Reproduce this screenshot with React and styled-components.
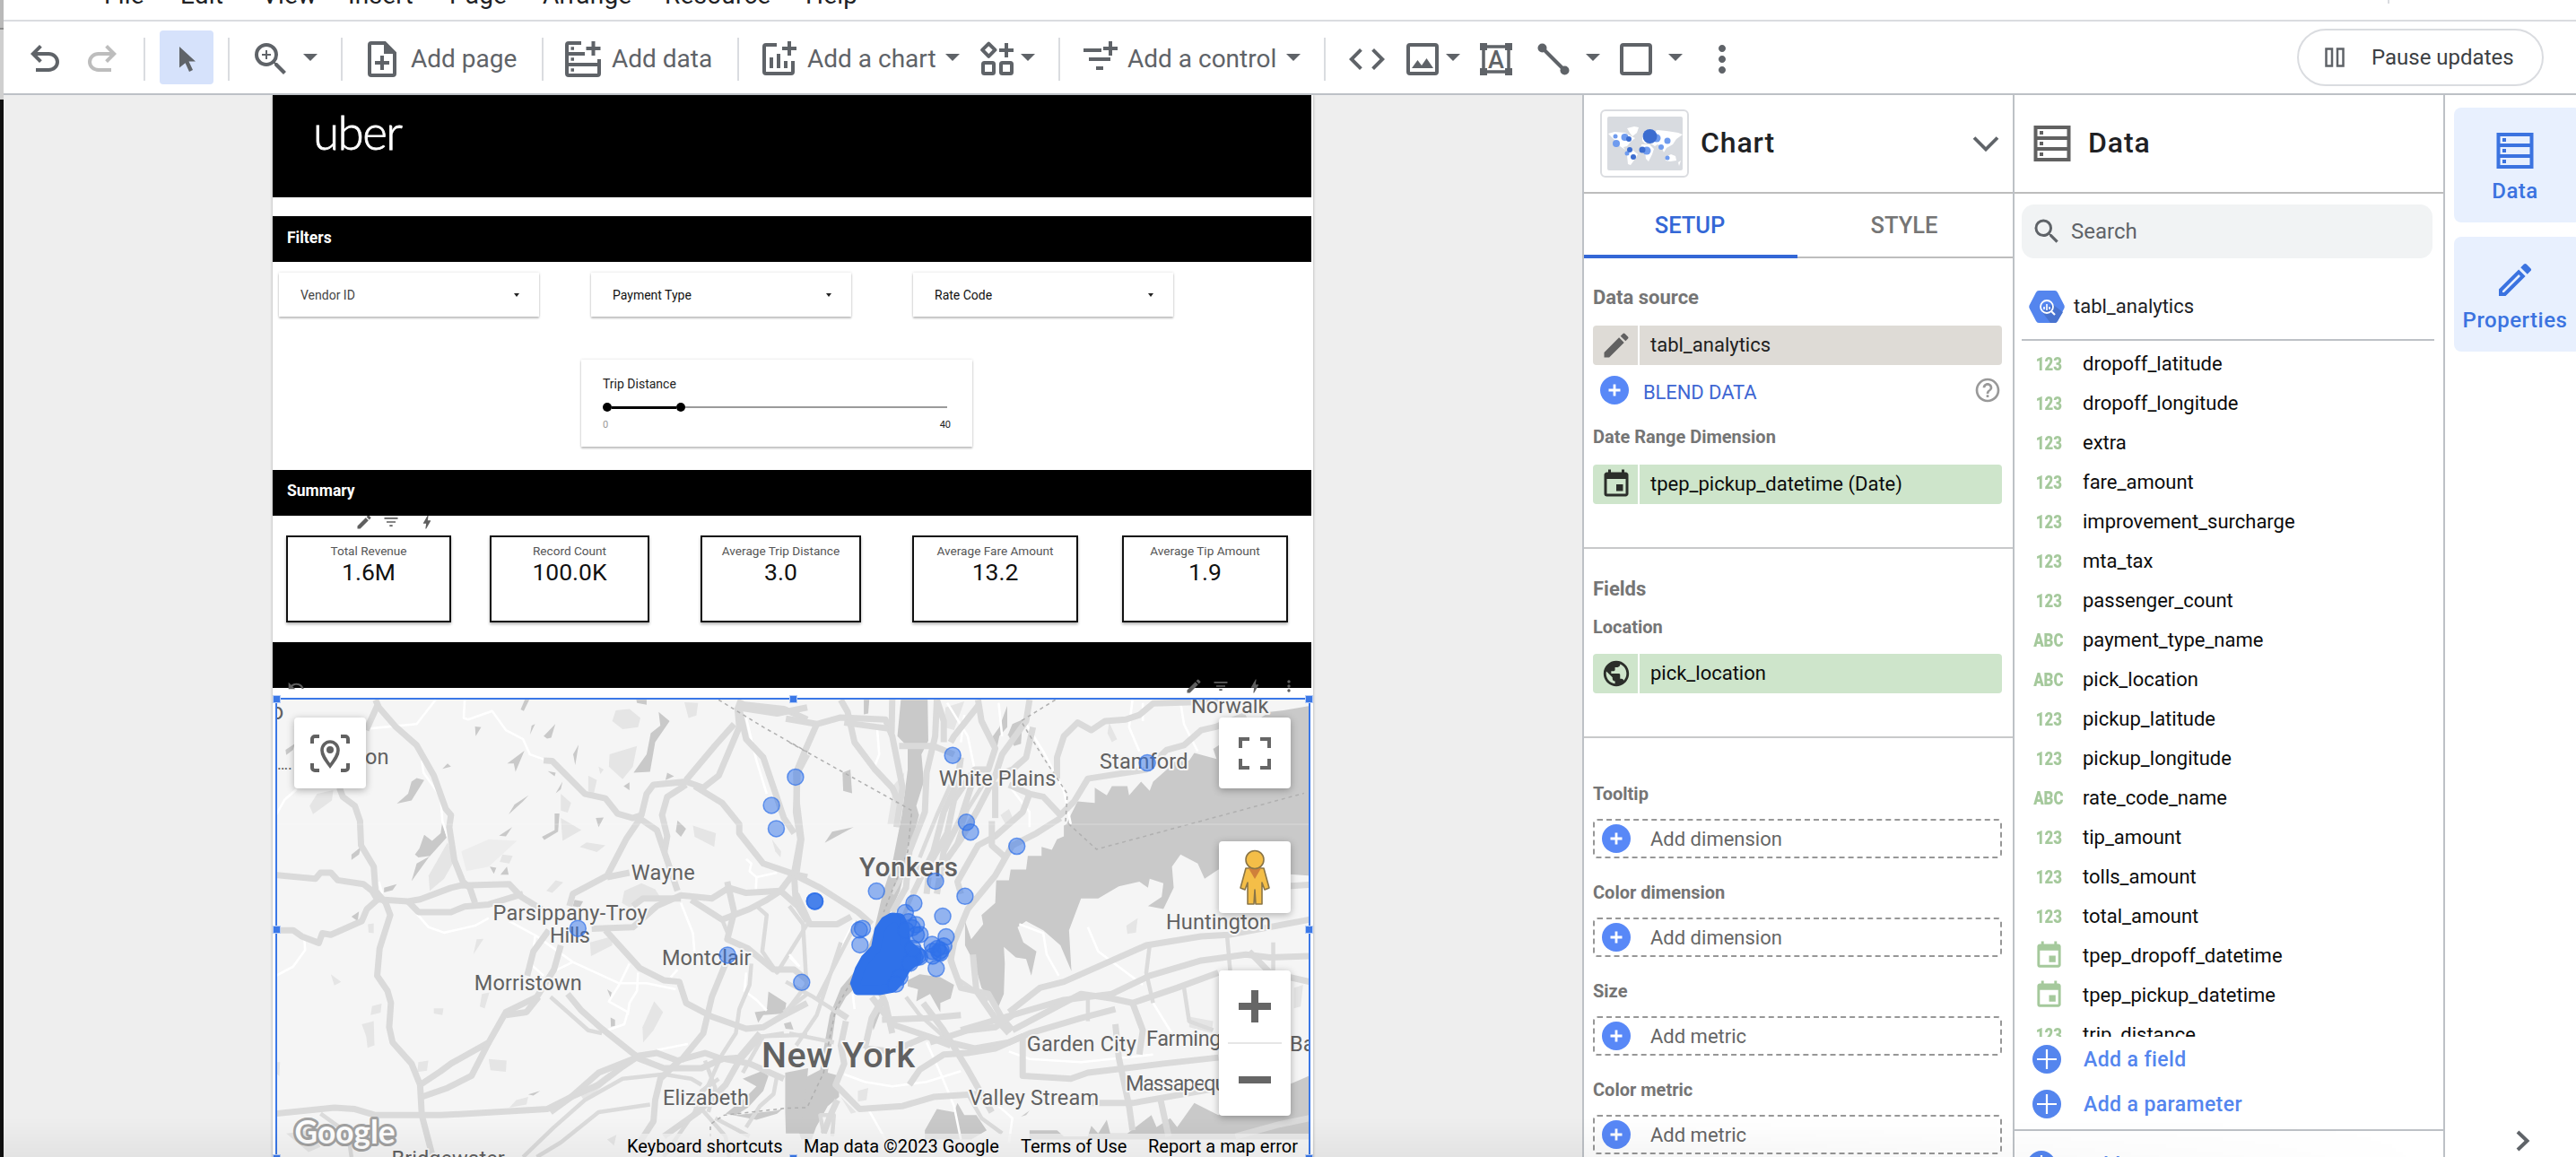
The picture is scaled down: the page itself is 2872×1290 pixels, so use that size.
import React from "react";
import styled, { createGlobalStyle, css } from "styled-components";
import {
  MdBolt,
  MdCode,
  MdEdit,
  MdEvent,
  MdFilterList,
  MdHelpOutline,
  MdMoreVert,
  MdOutlineEdit,
  MdPublic,
  MdSearch,
  MdUndo,
  MdZoomIn,
} from "react-icons/md";

const Global = createGlobalStyle`
  * { box-sizing: border-box; }
  html, body { margin: 0; padding: 0; background: #fff; }
  body { font-family: Roboto, "Liberation Sans", sans-serif; overflow: hidden; }
  svg { display: block; flex: none; }
`;

/* ---------- shell ---------- */

const Screen = styled.div`
  position: relative;
  display: flex;
  width: 2872px;
  height: 1290px;
  overflow: hidden;
  background: #fff;
`;

const DesktopEdge = styled.div`
  flex: none;
  width: 4px;
  background: linear-gradient(
    #b9b9b9 0 31px,
    #8c8c8c 31px 33px,
    #cfcfcf 33px 111px,
    #101010 111px
  );
`;

const AppWindow = styled.div`
  flex: 1;
  display: flex;
  flex-direction: column;
  min-width: 0;
`;

const BottomShade = styled.div`
  position: absolute;
  left: 0;
  right: 0;
  bottom: 0;
  height: 44px;
  background: linear-gradient(rgba(0, 0, 0, 0), rgba(0, 0, 0, 0.045));
  mask-image: linear-gradient(to right, #000 60%, transparent 95%);
  pointer-events: none;
`;

/* ---------- menu ---------- */

const MenuBar = styled.nav`
  flex: none;
  display: flex;
  height: 24px;
  border-bottom: 2px solid #dadce0;
  overflow: hidden;
`;

const MenuItem = styled.span`
  flex: none;
  width: ${(p) => p.$w}px;
  margin-top: -21px;
  font-size: 28px;
  line-height: 32px;
  letter-spacing: 0.2px;
  color: #202124;
  white-space: nowrap;
`;

const MenuLead = styled.div`
  flex: none;
  width: 112px;
`;

const AvatarRule = styled.div`
  width: 2px;
  height: 4px;
  margin-left: auto;
  margin-right: 208px;
  background: #dadce0;
`;

/* ---------- toolbar ---------- */

const ToolBar = styled.div`
  flex: none;
  display: flex;
  align-items: center;
  height: 82px;
  border-bottom: 2px solid #bdc1c6;
  color: #5f6368;
`;

const Rule = styled.div`
  flex: none;
  width: 2px;
  height: 48px;
  margin: 4px ${(p) => p.$r}px 0 ${(p) => p.$l}px;
  background: #dadce0;
`;

const Tool = styled.div`
  flex: none;
  display: flex;
  align-items: center;
  justify-content: center;
  width: ${(p) => p.$w}px;
  margin-left: ${(p) => p.$l || 0}px;
  margin-top: 4px;
  color: ${(p) => (p.$muted ? "#bdbdbd" : "#5f6368")};
`;

const SelectTool = styled.div`
  flex: none;
  display: flex;
  align-items: center;
  justify-content: center;
  width: 60px;
  height: 60px;
  padding: 3px 0 0 1px;
  border-radius: 4px;
  background: #d6e2fb;
`;

const ToolText = styled.span`
  flex: none;
  width: ${(p) => p.$w}px;
  margin-left: ${(p) => p.$l}px;
  margin-top: 3px;
  font-size: 28px;
  line-height: 32px;
  white-space: nowrap;
`;

const Caret = styled.i`
  flex: none;
  width: 0;
  height: 0;
  margin-left: ${(p) => p.$l}px;
  border: 8px solid transparent;
  border-top-color: #5f6368;
  border-bottom-width: 0;
`;

const PauseButton = styled.button`
  flex: none;
  display: flex;
  align-items: center;
  width: 275px;
  height: 64px;
  margin: 0 36px 0 auto;
  padding: 0 0 0 29px;
  gap: 30px;
  border: 2px solid #dadce0;
  border-radius: 32px;
  background: #fff;
  font: 400 24px Roboto, sans-serif;
  color: #3c4043;
  white-space: nowrap;
`;

/* ---------- workspace ---------- */

const Workspace = styled.div`
  flex: 1;
  display: flex;
  min-height: 0;
`;

const Canvas = styled.main`
  flex: none;
  width: 1760px;
  padding-left: 300px;
  background: #eee;
  overflow: hidden;
`;

const Page = styled.div`
  display: flex;
  flex-direction: column;
  width: 1160px;
  height: 1200px;
  background: #fff;
  box-shadow: 0 0 3px rgba(0, 0, 0, 0.3);
`;

const Hero = styled.header`
  flex: none;
  width: 1158px;
  height: 114px;
  margin-bottom: 21px;
  padding: 11px 0 0 45px;
  background: #000;
`;

const Brand = styled.div`
  font-family: Lato, sans-serif;
  font-weight: 300;
  font-size: 53px;
  line-height: 60px;
  letter-spacing: -1.6px;
  -webkit-text-stroke: 0.8px #fff;
  color: #fff;
`;

const Band = styled.div`
  flex: none;
  width: 1158px;
  height: 51px;
  padding-left: 16px;
  background: #000;
  color: #fff;
  font-size: 17.5px;
  font-weight: 700;
  line-height: ${(p) => p.$lh || 48}px;
`;

const cardShadow = css`
  background: #fff;
  box-shadow: 0 2px 2px rgba(0, 0, 0, 0.22), 0 0 3px rgba(0, 0, 0, 0.14);
`;

const FilterRow = styled.div`
  flex: none;
  display: flex;
  padding: 12px 0 0 7px;
`;

const FilterCard = styled.div`
  flex: none;
  display: flex;
  align-items: center;
  justify-content: space-between;
  width: 290px;
  height: 49px;
  margin-right: ${(p) => p.$gap}px;
  padding: 0 22px 0 24px;
  font-size: 14px;
  color: ${(p) => p.$color || "#111"};
  ${cardShadow}
`;

const SmallCaret = styled.i`
  border: 3.5px solid transparent;
  border-top: 4.5px solid #222;
  border-bottom-width: 0;
`;

const SliderCard = styled.div`
  flex: none;
  display: flex;
  flex-direction: column;
  width: 436px;
  height: 97px;
  margin: 48px 0 26px 344px;
  padding: 19px 24px 0;
  font-size: 14px;
  line-height: 16px;
  color: #222;
  ${cardShadow}
`;

const SliderTrack = styled.div`
  display: flex;
  align-items: center;
  height: 12px;
  width: 384px;
  margin-top: 12px;
`;

const Thumb = styled.div`
  width: 10px;
  height: 10px;
  border-radius: 50%;
  background: #000;
`;

const TrackPart = styled.div`
  width: ${(p) => p.$w}px;
  height: ${(p) => (p.$on ? 3 : 2)}px;
  background: ${(p) => (p.$on ? "#000" : "#9a9a9a")};
`;

const SliderEnds = styled.div`
  display: flex;
  justify-content: space-between;
  width: 388px;
  margin-top: 6px;
  font-size: 11px;
`;

const EndValue = styled.span`
  color: ${(p) => (p.$dim ? "#999" : "#222")};
`;

const MiniTools = styled.div`
  flex: none;
  display: flex;
  align-items: flex-start;
  height: 22px;
  padding-left: 92px;
  overflow: hidden;
  color: #5f5f5f;
`;

const MiniIcon = styled.span`
  display: flex;
  margin: ${(p) => p.$t || 0}px ${(p) => p.$r || 0}px 0 0;
`;

const ScoreRow = styled.div`
  flex: none;
  display: flex;
  height: 119px;
  padding-left: 15px;
`;

const ScoreCard = styled.div`
  flex: none;
  width: ${(p) => p.$w}px;
  height: 97px;
  margin-right: ${(p) => p.$gap}px;
  padding-top: 5px;
  border: 2px solid #111;
  text-align: center;
  box-shadow: 0 2px 3px rgba(0, 0, 0, 0.3);
`;

const ScoreLabel = styled.div`
  font-size: 13.6px;
  line-height: 20px;
  color: #555;
  white-space: nowrap;
`;

const ScoreValue = styled.div`
  font-size: 26.5px;
  line-height: 28px;
  color: #111;
`;

/* ---------- map ---------- */

const MapFrame = styled.div`
  position: relative;
  flex: none;
  width: 1154px;
  height: 540px;
  margin: 11px 0 0 3px;
  border: 2px solid #3b78e7;
`;

const Handle = styled.i`
  position: absolute;
  left: ${(p) => p.$x}px;
  top: ${(p) => p.$y}px;
  width: 9px;
  height: 9px;
  border: 1px solid #b6cdf7;
  background: #3b78e7;
`;

const MapTools = styled.div`
  position: absolute;
  right: ${(p) => (p.$left === undefined ? "12px" : "auto")};
  left: ${(p) => (p.$left === undefined ? "auto" : p.$left + "px")};
  top: ${(p) => p.$top}px;
  display: flex;
  align-items: flex-start;
  color: #5f5f5f;
`;

const MapButton = styled.div`
  position: absolute;
  left: ${(p) => p.$x}px;
  top: ${(p) => p.$y}px;
  display: flex;
  flex-direction: column;
  align-items: center;
  justify-content: center;
  width: 80px;
  height: ${(p) => p.$h || 79}px;
  border-radius: 4px;
  background: #fff;
  box-shadow: 0 2px 8px rgba(0, 0, 0, 0.3);
`;

const ZoomHalf = styled.div`
  flex: 1;
  display: flex;
  align-items: center;
  justify-content: center;
`;

const ZoomRule = styled.div`
  width: 60px;
  height: 2px;
  background: #e6e6e6;
`;

const MapFooter = styled.div`
  position: absolute;
  left: 382px;
  right: 0;
  top: 484px;
  height: 56px;
  display: flex;
  padding-left: 8px;
  background: rgba(245, 245, 245, 0.7);
  font-size: 20px;
  line-height: 28px;
  color: #000;
  white-space: nowrap;
`;

const FooterLink = styled.span`
  flex: none;
  width: ${(p) => p.$w}px;
`;

/* ---------- panels ---------- */

const Panel = styled.aside`
  flex: none;
  display: flex;
  flex-direction: column;
  width: ${(p) => p.$w}px;
  border-left: 2px solid #bdc1c6;
  overflow: hidden;
`;

const PanelHead = styled.div`
  flex: none;
  display: flex;
  align-items: center;
  height: 110px;
  padding: 0 15px 0 ${(p) => p.$l}px;
  border-bottom: 2px solid #bdbdbd;
`;

const PanelTitle = styled.h2`
  flex: 1;
  margin: -2px 0 0 ${(p) => p.$l}px;
  font-size: 32px;
  font-weight: 500;
  letter-spacing: 0.9px;
  color: #202124;
`;

const ThumbFrame = styled.div`
  flex: none;
  display: flex;
  align-items: center;
  justify-content: center;
  width: 99px;
  height: 76px;
  border: 2px solid #dadce0;
  border-radius: 6px;
`;

const Tabs = styled.div`
  flex: none;
  display: flex;
  height: 72px;
`;

const Tab = styled.div`
  flex: ${(p) => (p.$on ? "0 0 238px" : 1)};
  display: flex;
  align-items: center;
  justify-content: center;
  padding-top: ${(p) => (p.$on ? 1 : 0)}px;
  padding-right: 2px;
  border-bottom: ${(p) => (p.$on ? "4px solid #3367d6" : "2px solid #bdbdbd")};
  font-size: 25.5px;
  font-weight: 500;
  color: ${(p) => (p.$on ? "#3367d6" : "#757575")};
`;

const Section = styled.section`
  flex: none;
  display: flex;
  flex-direction: column;
  height: ${(p) => p.$h}px;
  padding: ${(p) => p.$t}px 12px 0 10px;
  border-bottom: 2px solid #c8c9ca;
`;

const Heading = styled.div`
  height: ${(p) => p.$h}px;
  font-size: ${(p) => (p.$big ? 22 : 20)}px;
  font-weight: 700;
  line-height: 26px;
  color: #757575;
  white-space: nowrap;
`;

const Chip = styled.div`
  flex: none;
  display: flex;
  gap: 2px;
  height: 44px;
  border-radius: 4px;
  overflow: hidden;
`;

const ChipIcon = styled.div`
  display: flex;
  align-items: center;
  justify-content: center;
  width: 50px;
  padding-left: 2px;
  background: ${(p) => p.$bg};
  color: ${(p) => p.$fg};
`;

const ChipText = styled.div`
  flex: 1;
  padding-left: 12px;
  background: ${(p) => p.$bg};
  font-size: 22px;
  line-height: 43px;
  color: ${(p) => p.$fg};
`;

const BlendRow = styled.div`
  flex: none;
  display: flex;
  align-items: center;
  height: 56px;
  margin-bottom: 11px;
  padding-left: 8px;
  color: #999;
`;

const BlendText = styled.span`
  flex: 1;
  margin: 4px 0 0 16px;
  font-size: 22px;
  letter-spacing: -0.1px;
  color: #3f67d3;
`;

const Slot = styled.div`
  flex: none;
  display: flex;
  align-items: center;
  gap: 22px;
  height: 44px;
  margin-bottom: 25px;
  padding-left: 8px;
  border: 2px dashed #979797;
  border-radius: 5px;
  font-size: 22px;
  color: #666;
`;

const SearchBox = styled.div`
  flex: none;
  display: flex;
  align-items: center;
  gap: 9px;
  height: 60px;
  margin: 12px 12px 0 8px;
  padding-left: 10px;
  border-radius: 14px;
  background: #f1f3f4;
  font-size: 24px;
  color: #5f6368;
`;

const SourceRow = styled.div`
  flex: none;
  display: flex;
  align-items: center;
  gap: 10px;
  height: 92px;
  margin: 0 10px 0 8px;
  padding: 17px 0 0 8px;
  border-bottom: 2px solid #bdc1c6;
  font-size: 22px;
  color: #202124;
`;

const FieldList = styled.div`
  flex: none;
  height: 776px;
  padding-top: 3px;
  overflow: hidden;
`;

const FieldRow = styled.div`
  display: flex;
  align-items: center;
  height: 44px;
  padding-left: 20px;
  font-size: 22px;
  color: #0c0c0c;
`;

const FieldKind = styled.div`
  display: flex;
  align-items: center;
  justify-content: center;
  width: 36px;
  height: 44px;
  margin-right: 20px;
  color: #a5c99c;
  font-size: 20px;
  font-weight: 900;
`;

const Squeeze = styled.span`
  display: block;
  transform: scaleX(0.84);
  padding-top: 1px;
`;

const AddRow = styled.div`
  flex: none;
  display: flex;
  align-items: center;
  gap: 25px;
  height: 50px;
  padding-left: 20px;
  font-size: 23px;
  font-weight: 500;
  letter-spacing: 0.4px;
  color: #5485ee;
`;

const AddDataRow = styled(AddRow)`
  height: 70px;
  margin-top: 3px;
  padding: 8px 0 0 14px;
  gap: 30px;
  border-top: 2px solid #bdc1c6;
`;

const Rail = styled.aside`
  flex: 1;
  display: flex;
  flex-direction: column;
  align-items: flex-start;
  gap: 16px;
  padding: 14px 0 0 10px;
  border-left: 2px solid #bdc1c6;
`;

const RailButton = styled.div`
  flex: none;
  display: flex;
  flex-direction: column;
  align-items: center;
  justify-content: center;
  gap: 9px;
  width: 142px;
  height: 128px;
  padding: 7px 6px 0 0;
  border-radius: 8px;
  background: #e8f0fe;
  font-size: 24px;
  font-weight: 500;
  line-height: 30px;
  letter-spacing: 0.5px;
  color: #3b73e0;
`;

const RailIcon = styled.div`
  display: flex;
  align-items: center;
  justify-content: center;
  height: 42px;
`;

const RailExpand = styled.div`
  margin: auto 0 0 69px;
  padding-bottom: 6px;
`;

/* ---------- icons ---------- */

const UndoIcon = ({ flip }) => (
  <svg width="48" height="48" viewBox="0 0 24 24" fill="currentColor">
    <path
      transform={flip ? "translate(24 0) scale(-1 1)" : undefined}
      d="M7 19v-2h7.1q1.575 0 2.738-1T18 13.5T16.838 11T14.1 10H7.8l2.6 2.6L9 14L4 9l5-5l1.4 1.4L7.8 8h6.3q2.425 0 4.163 1.575T20 13.5t-1.737 3.925T14.1 19z"
    />
  </svg>
);

const Glyph = ({ w, children }) => (
  <svg width={w} height="40" viewBox={`0 0 ${w} 40`} fill="none" stroke="currentColor" strokeWidth="4">
    {children}
  </svg>
);

const AddPageIcon = () => (
  <Glyph w={32}>
    <path d="M4 2H19L30 13V36a2 2 0 0 1-2 2H4a2 2 0 0 1-2-2V4a2 2 0 0 1 2-2Z" />
    <path d="M18 2V14H30L19 2Z" fill="currentColor" stroke="none" />
    <path d="M16 16V32M8 24H24" />
  </Glyph>
);

const AddDataIcon = () => (
  <Glyph w={40}>
    <path d="M18 2H4a2 2 0 0 0-2 2V36a2 2 0 0 0 2 2H36a2 2 0 0 0 2-2V20M2 14H22M2 26H38M31.500 0V16M23.500 8H39.500" />
    <path d="M6.500 8H10M6.500 20H10M6.500 32H10" strokeWidth="3.500" />
  </Glyph>
);

const AddChartIcon = () => (
  <Glyph w={38}>
    <path d="M16 4H4a2 2 0 0 0-2 2V34a2 2 0 0 0 2 2H32a2 2 0 0 0 2-2V22M10 18V30M18 14V30M26 22V30M30 0V16M22 8H38" />
  </Glyph>
);

const CommunityIcon = () => (
  <Glyph w={38}>
    <path d="M10.300 2.600L17.400 9.700L10.300 16.800L3.200 9.700Z" strokeLinejoin="round" />
    <path d="M30 2V18M22 10H38" />
    <rect x="4" y="24" width="12" height="12" rx="1.500" />
    <rect x="24" y="24" width="12" height="12" rx="1.500" />
  </Glyph>
);

const AddControlIcon = () => (
  <Glyph w={38}>
    <path d="M0 10H20M6 20H30M14 30H22M30 0V16M22 8H38" />
  </Glyph>
);

const ImageIcon = () => (
  <Glyph w={36}>
    <rect x="2" y="4" width="32" height="32" rx="2" />
    <path d="M6 30L12.500 21L17 27L22.500 19L30 30Z" fill="currentColor" stroke="none" />
  </Glyph>
);

const TextIcon = () => (
  <Glyph w={36}>
    <path d="M4 6H32V34H4Z" strokeWidth="3.500" />
    <path d="M0 2H8V10H0ZM28 2H36V10H28ZM0 30H8V38H0ZM28 30H36V38H28Z" fill="currentColor" stroke="none" />
    <text x="18" y="30" textAnchor="middle" fontSize="27" fontWeight="500" fontFamily="Roboto, sans-serif" fill="currentColor" stroke="none">A</text>
  </Glyph>
);

const LineIcon = () => (
  <Glyph w={36}>
    <path d="M5 7L31 33" />
    <circle cx="5.500" cy="7.500" r="5" fill="currentColor" stroke="none" />
    <circle cx="30.500" cy="32.500" r="5" fill="currentColor" stroke="none" />
  </Glyph>
);

const ShapeIcon = () => (
  <Glyph w={36}>
    <rect x="2" y="4" width="32" height="32" rx="2" />
  </Glyph>
);

const PointerIcon = () => (
  <svg width="20" height="28" viewBox="0 0 20 28" fill="#5f6368">
    <path d="M1 0L19 16.500H11.500L16 26L12 28L7.600 18.300L1 23.500Z" />
  </svg>
);

const PauseIcon = () => (
  <svg width="22" height="22" viewBox="0 0 22 22" fill="none" stroke="#5f6368" strokeWidth="2.500">
    <path d="M1.500 1.500H8V20.500H1.500ZM14 1.500H20.500V20.500H14Z" />
  </svg>
);

const RackIcon = ({ color }) => (
  <svg width="42" height="40" viewBox="0 0 42 40" fill="none" stroke={color} strokeWidth="4">
    <path d="M2.500 2H39.500V38H2.500ZM2.500 14H39.500M2.500 26H39.500" />
    <path d="M7 8H11M7 20H11M7 32H11" />
  </svg>
);

const PlusDisc = ({ thin }) => (
  <svg width="32" height="32" viewBox="0 0 32 32">
    <circle cx="16" cy="16" r="16" fill={thin ? "#5485ee" : "#5888f7"} />
    {thin ? (
      <path d="M16 5V27M5 16H27" stroke="#fff" strokeWidth="2.200" />
    ) : (
      <path d="M16 9.500V22.500M9.500 16H22.500" stroke="#fff" strokeWidth="2.800" />
    )}
  </svg>
);

const Chevron = ({ right }) =>
  right ? (
    <svg width="16" height="24" viewBox="0 0 16 24" fill="none" stroke="#5f6368" strokeWidth="4">
      <path d="M2 2L12.500 12L2 22" />
    </svg>
  ) : (
    <svg width="30" height="18" viewBox="0 0 30 18" fill="none" stroke="#5f6368" strokeWidth="3.800">
      <path d="M2 2.500L15 15.500L28 2.500" />
    </svg>
  );

const QueryIcon = () => (
  <svg width="40" height="36" viewBox="0 0 40 36">
    <path d="M11 0H29Q31 0 32 2L39.500 16.500Q40 18 39.500 19.500L32 34Q31 36 29 36H11Q9 36 8 34L.5 19.500Q0 18 .5 16.500L8 2Q9 0 11 0Z" fill="#5485ee" />
    <path d="M26 15L38 24L32 34Q31 36 29 36H24L15 24Z" fill="#4873cf" />
    <circle cx="20" cy="18" r="7" fill="none" stroke="#fff" strokeWidth="1.800" />
    <path d="M25 23L29 27" stroke="#fff" strokeWidth="2.200" />
    <path d="M17 18V21M20 15V22M23 18V21" stroke="#fff" strokeWidth="1.600" />
  </svg>
);

const MapThumb = () => (
  <svg width="84" height="60" viewBox="0 0 84 60">
    <rect width="84" height="60" rx="2" fill="#d8dbe0" />
    <g fill="#fff">
      <path d="M1 19L8 17L20 18L27 22L31 24L26 28L22 33L18 34L20 37L14 33L9 27L5 23Z" />
      <path d="M22 13L30 11L35 12L33 18L28 22L25 18Z" />
      <path d="M23 37L29 38L34 42L31 47L26 54L23 53L22 43Z" />
      <path d="M39 21L43 17L49 18L56 15L66 16L79 18L84 20L77 25L73 31L66 35L63 40L60 33L56 31L53 33L47 29L42 30L39 27Z" />
      <path d="M38 31L47 31L52 36L50 42L46 50L43 47L42 39L37 37Z" />
      <path d="M65 45L71 42L76 44L77 49L70 50L65 49Z" />
      <path d="M79 51L82 49L80 55Z" />
    </g>
    <g fill="#6f9bee">
      <circle cx="10" cy="30" r="4" />
      <circle cx="19.500" cy="23" r="4" />
      <circle cx="9" cy="22" r="2.500" />
      <circle cx="44" cy="38" r="4.500" />
      <circle cx="55" cy="24" r="4.500" />
      <circle cx="67" cy="27" r="3.500" />
      <circle cx="60" cy="34" r="3" />
      <circle cx="67" cy="46" r="2.500" />
      <circle cx="22" cy="41" r="2.500" />
    </g>
    <g fill="#3c6dd0">
      <circle cx="47.500" cy="22" r="8" />
      <circle cx="24" cy="25" r="3" />
      <circle cx="25" cy="37" r="3" />
      <circle cx="29" cy="45" r="3" />
      <circle cx="39" cy="37" r="3.500" />
    </g>
  </svg>
);

const LocateIcon = () => (
  <svg width="46" height="44" viewBox="0 0 46 44" fill="none" stroke="#616161" strokeWidth="4">
    <path d="M3 11V6a3 3 0 0 1 3-3H11M35 3H40a3 3 0 0 1 3 3V11M43 33V38a3 3 0 0 1-3 3H35M11 41H6a3 3 0 0 1-3-3V33" />
    <path d="M23 36C17 28 14 23.500 14 18.500a9 9.500 0 0 1 18 0C32 23.500 29 28 23 36Z" strokeWidth="3.600" />
    <circle cx="23" cy="18" r="4" fill="#616161" stroke="none" />
  </svg>
);

const FullscreenGlyph = () => (
  <svg width="36" height="36" viewBox="0 0 36 36" fill="none" stroke="#666" strokeWidth="4">
    <path d="M2 12V2H12M24 2H34V12M34 24V34H24M12 34H2V24" />
  </svg>
);

const Pegman = () => (
  <svg width="36" height="62" viewBox="0 0 36 62" stroke="#8a7547" strokeWidth="1.600">
    <path d="M8 21H28L34 43L29 45L26 37L26 61H19L18 45L17 61H10L10 37L7 45L2 43Z" fill="#f4be48" strokeLinejoin="round" />
    <path d="M11 21H25L18 33Z" fill="#d0803a" stroke="none" />
    <circle cx="18" cy="11.500" r="10" fill="#f4be48" />
  </svg>
);

const PlusGlyph = () => (
  <svg width="36" height="36" viewBox="0 0 36 36" stroke="#666" strokeWidth="8">
    <path d="M18 0V36M0 18H36" />
  </svg>
);

const MinusGlyph = () => (
  <svg width="36" height="36" viewBox="0 0 36 36" stroke="#666" strokeWidth="8">
    <path d="M0 18H36" />
  </svg>
);

/* ---------- map drawing ---------- */

const west = {
  parks: [
    "1010,95 1050,90 1082,120 1075,150 1030,157 1000,130",
    "992,240 1072,212 1060,280 1030,322 990,280",
    "1210,68 1250,70 1245,112 1222,120",
    "850,450 910,490 855,525",
    "905,545 925,530 980,540 955,562",
    "680,570 710,575 700,600 672,595",
    "835,655 857,662 825,697 808,690",
    "1028,730 1035,690 1085,665 1125,685 1142,715 1080,728 1050,745",
    "1122,1055 1148,1090 1120,1150 1090,1190 1088,1140",
    "1235,475 1302,500 1297,545 1240,512",
    "118,410 140,370 187,358 183,392 128,437",
    "465,640 520,530 540,590 510,650 468,690",
    "270,1130 305,1120 307,1200 287,1208 283,1170",
    "300,1070 328,1062 325,1092 296,1100",
    "640,1245 692,1250 690,1287 645,1282",
    "435,1255 464,1250 460,1283 432,1288",
    "480,1078 508,1078 505,1100 480,1095",
    "180,965 210,990 190,1002",
    "620,1030 642,1025 628,1078 614,1072",
    "605,850 625,848 595,900",
    "935,860 1000,840 1000,870 938,905",
    "985,1510 1012,1495 1005,1530",
    "50,1490 120,1480 150,1535 115,1552",
    "288,800 305,797 305,830 290,828",
    "20,1255 32,1255 30,1302 20,1290",
    "720,1380 755,1370 750,1395 700,1405",
    "930,310 955,325 945,375 930,360",
    "850,370 880,400 870,432 850,425",
    "960,280 975,290 965,305",
    "905,1360 990,1290 995,1310 920,1385",
    "1465,520 1492,560 1490,580 1475,560",
  ],
  pale: ["560,560 640,520 722,525 640,610 575,625"],
  water: [
    "1135,100 1167,130 1125,200 1110,297 1062,300 1100,240 1112,170 1140,145",
    "452,505 475,525 500,500 505,460 517,515 465,580 415,658 430,600 470,575 435,580 425,570 438,550",
    "430,318 452,325 415,392 372,402 405,370 415,330",
    "758,60 742,97 733,92 745,60",
    "1070,60 1100,60 1100,76 1072,70",
    "600,148 618,150 602,180",
    "765,145 775,140 760,175",
    "834,140 822,185 810,188 800,180",
    "744,228 718,297 713,270 694,270",
    "902,208 892,275 886,240",
    "756,375 740,395 698,438 715,405",
    "832,435 846,435 842,495 802,522 795,512 832,490",
    "708,480 690,510 670,508",
    "952,450 975,448 960,480",
    "1190,458 1215,485 1200,512 1185,495",
    "335,680 372,668 360,688 335,695",
    "240,570 268,545 262,570 240,588",
    "240,775 262,758 258,790",
    "505,288 520,270 530,280",
    "643,610 662,614 655,634",
    "693,610 698,637 674,637",
    "1033,345 1050,332 1050,358",
    "1160,300 1180,312 1155,325",
    "890,720 915,725 905,745 885,740",
    "1455,1022 1507,1060 1502,1095 1440,1100 1425,1125 1415,1090 1450,1085",
    "1500,1128 1520,1122 1528,1148 1505,1145",
    "985,1015 998,1025 995,1042",
    "995,1108 1008,1115 1008,1135 996,1138",
    "48,225 75,205 70,225 50,242",
    "1380,1310 1435,1285 1455,1300 1440,1350 1395,1405 1360,1430 1480,1415 1500,1405 1480,1425 1420,1445 1330,1425 1390,1370 1420,1335",
    "755,1362 790,1350 770,1365",
    "812,295 835,300 832,312",
    "855,330 850,355 835,368",
  ],
  major: [
    "20,638 135,650 150,630 180,630 200,655 275,668 300,690 315,718 405,725 440,718 530,680 560,672 700,668 735,710 800,755",
    "205,350 215,380 250,410 265,460 268,540 305,610 310,690 340,730 353,770 322,880 315,970 345,1020 355,1060 350,1140 360,1190 415,1260 440,1330 445,1430 475,1560",
    "310,60 320,85 370,150 430,210 480,310 515,420 530,440 525,480 540,590 565,660 585,680 600,730",
    "315,80 283,160",
    "20,820 70,820 95,840 145,862 155,830 180,835 270,790 285,750 320,715",
    "405,725 435,760 530,760 570,742 640,735 740,700",
    "940,815 1060,810 1130,740 1200,705 1290,715 1340,680 1390,697 1490,690 1540,740 1568,790",
    "1060,740 1090,715 1200,715",
    "980,820 1080,945 1150,985 1195,990 1215,1060 1290,1105 1390,1145 1440,1140 1500,1100 1568,1060",
    "800,260 825,262 920,370 980,385 1015,435 1060,450 1085,440 1100,370 1120,340 1215,330 1265,350 1310,310 1370,150 1365,90 1375,60",
    "1215,325 1300,210 1355,140",
    "1085,445 1040,520 985,640 885,700 875,740",
    "985,645 1050,630",
    "1085,455 1130,490 1160,590 1190,690",
    "1215,340 1160,380 1145,440 1160,510 1152,560",
    "1240,345 1320,400 1370,470 1370,500 1440,600 1530,635 1568,645",
    "1370,90 1390,190 1440,250 1500,450 1530,500",
    "1375,75 1500,90 1568,125",
    "1365,85 1480,105 1568,85",
    "1568,240 1540,300 1535,430 1548,520 1530,630 1490,690",
    "1335,660 1355,760 1335,850 1395,880 1470,950 1530,950 1568,985",
    "1230,720 1320,785 1400,750 1450,720 1490,690",
    "1530,640 1535,740",
    "1330,930 1290,1040 1265,1160 1200,1250",
    "815,820 770,890 752,970",
    "850,870 830,950 780,1040 690,1090 640,1190 530,1260 500,1285 440,1330",
    "785,1040 750,1090 690,1100",
    "640,1190 590,1300 520,1340 445,1370",
    "870,1030 910,1085 970,1145 1070,1235 1130,1225 1190,1250 1270,1225 1320,1245 1370,1240 1430,1160",
    "20,1425 190,1405 250,1410 310,1430 500,1430 810,1410 880,1370 960,1290 1070,1240",
    "820,1420 880,1370 960,1330 1030,1270 1070,1240",
    "1070,1240 1150,1275 1260,1275 1320,1245",
    "1195,1250 1140,1310 1125,1380 1120,1450 1080,1520",
    "1430,1170 1370,1250 1330,1330 1250,1420 1150,1500",
    "1330,1245 1400,1260 1500,1310",
  ],
  mid: [
    "820,1040 860,1080 930,1150 970,1160",
    "740,1568 830,1470 920,1380 1030,1310 1150,1295 1230,1310 1260,1330",
    "780,1568 850,1520 960,1420 1110,1395",
    "1420,740 1450,770 1437,890 1480,960 1568,800",
    "1405,930 1400,1000 1370,1080 1360,1160 1320,1230 1280,1330 1230,1400",
    "1320,785 1340,840",
    "150,1425 230,1490 240,1568",
    "1260,1410 1330,1500 1340,1568",
    "1240,1420 1190,1500 1150,1568",
    "1300,1440 1400,1500",
    "1500,1160 1440,1170 1380,1290",
    "1568,1165 1430,1170",
    "1310,1310 1260,1350 1240,1420",
    "1480,1300 1470,1360 1430,1400 1390,1470",
    "1270,1250 1300,1340 1280,1420",
    "1568,1030 1500,1090",
  ],
  white: [
    "290,155 430,140 485,60",
    "570,60 567,120 580,125 650,97 690,160 740,190 760,240 810,260",
    "445,260 450,300 500,380 505,460 520,510",
    "430,765 465,810 510,828 600,805 640,780",
    "700,790 780,840 885,925 1020,995 1100,995 1185,1015",
    "1200,730 1235,830 1240,900",
    "1190,950 1170,975",
    "20,970 70,940 105,885 103,850",
    "1390,120 1420,260 1450,370",
    "1390,585 1405,600 1400,625 1420,645 1480,630",
    "1420,645 1418,700",
    "1050,930 1020,1000 990,1055 1045,1090 1035,1130 985,1150",
    "1075,960 1072,1020 1050,1060 1045,1100",
    "1390,960 1385,1020 1420,1050 1450,1085",
    "20,440 45,390 80,355",
    "1130,1215 1220,1195",
    "830,955 885,925",
    "320,660 330,700",
    "775,840 765,935 800,970",
    "1510,900 1540,935",
  ],
};

const east = {
  parks: [
    "982,805 1015,780 1010,828 985,832",
    "1165,1105 1235,1120 1230,1160 1165,1140",
    "1470,1010 1497,1000 1490,1072 1470,1078",
    "932,135 955,190 940,200 927,170",
    "200,1350 230,1340 225,1380 200,1385",
    "305,340 335,300 315,470 286,470",
    "615,440 640,420 655,460 630,470",
    "455,85 510,65 480,160 450,150",
    "150,1370 195,1420 180,1425",
  ],
  pale: [],
  water: [
    "325,60 403,60 405,195 385,240 392,330 370,410 378,440 350,560 322,690 290,770 262,900 215,985 165,1040 135,1100 125,1180 112,1290 145,1300 145,1370 112,1400 78,1470 65,1510 35,1510 15,1440 25,1410 8,1350 40,1310 90,1280 105,1180 118,1100 150,1010 210,930 245,830 272,700 300,600 328,440 345,290 345,215 315,180",
    "-12,1290 55,1275 45,1400 30,1490 -10,1490 -12,1420",
    "1515,80 1440,95 1400,100 1235,222 1245,255 1180,235 1165,260 1120,265 1100,290 1060,330 1050,360 1025,330 990,375 985,345 940,345 925,375 890,350 890,400 840,395 820,440 808,470 800,475 800,510 780,520 765,555 735,545 735,575 695,575 690,620 645,620 640,655 603,655 600,730 560,770 565,800 530,850 512,790 512,870 540,930 560,1010 610,1070 625,1030 628,930 625,875 660,910 690,915 705,970 720,890 682,860 665,810 690,790 740,820 790,870 822,955 815,820 850,715 900,715 960,675 1020,660 1045,680 1050,650 1090,665 1085,710 1045,740 1090,750 1120,680 1115,610 1140,570 1190,600 1210,650 1250,620 1515,640",
    "345,985 380,965 440,975 480,1000 470,1045 440,1060 440,1090 410,1030 370,1055 375,1015 345,1005",
    "395,1480 430,1410 480,1420 490,1390 510,1430 545,1430 575,1480 530,1510 395,1510",
    "700,1480 780,1480 800,1500 870,1500 880,1465 900,1490 925,1445 935,1490 985,1490 1055,1430 1070,1470 1110,1440 1130,1470 1180,1390 1250,1430 1515,1300 1515,1510 700,1510",
    "103,532 125,495 187,480",
    "590,185 612,150 635,80 635,150 612,180 605,218 588,200",
    "637,175 650,140 680,125 675,205 655,212",
    "155,300 178,290 183,368 157,360",
    "217,60 233,60 230,105 217,108",
    "240,1120 285,1040 265,1090 245,1150",
    "675,1435 700,1415 690,1430",
  ],
  major: [
    "-10,122 80,140 150,118 280,125 300,180 330,350 312,480",
    "80,140 45,230 20,300 22,400 35,520 20,640",
    "150,60 170,100 190,200 250,290 300,350 320,400",
    "160,135 290,155",
    "300,60 298,170",
    "20,640 90,680 200,760 240,800",
    "20,700 60,800 140,800 180,775",
    "430,60 425,180 400,300 395,430 350,560 340,680 300,760",
    "320,212 420,212 480,240",
    "470,200 480,180 550,80",
    "430,60 450,130 450,200",
    "550,60 560,130 600,220 580,290 540,290 480,390 460,500 410,600 400,700",
    "700,60 690,130 620,240 600,310 550,420 500,520 450,600 440,640",
    "500,250 490,330 450,430 420,560 360,700",
    "540,310 500,450 450,560 430,700",
    "710,150 690,250 650,290 600,310",
    "1250,65 1060,72 1020,110 980,125 920,130 880,160 840,135 800,180 780,250 780,320",
    "1330,110 1240,150 1200,160 1150,210 1100,225 1040,290 870,320 830,395 790,440 740,380 700,370 640,340",
    "790,450 720,500 650,540 600,640 520,750 480,860 470,920 500,1010 580,1030 620,1110 650,1150",
    "700,370 680,430 600,510 550,540 490,660 500,700",
    "600,330 600,450",
    "590,460 590,540 630,580",
    "500,1150 620,1110 800,1050 940,1030 1050,970 1200,920 1330,900 1400,910 1515,905",
    "640,1090 730,1010 800,990 1040,870 1200,840 1280,835 1515,785",
    "650,1150 850,1030 940,1045 1000,1060 1130,1010 1250,960",
    "270,1115 400,1110 500,1100",
    "240,1040 300,1130 430,1180 540,1210 640,1190 700,1160 850,1110 950,1080",
    "390,1060 450,1150 520,1280 590,1420",
    "410,1190 520,1150 600,1140 650,1100",
    "165,1120 150,1200 160,1260 135,1330 205,1410 330,1400 420,1370 550,1360",
    "880,1390 1000,1390 1100,1370 1250,1340",
    "350,1330 380,1280 450,1230 520,1225 600,1210 680,1170",
    "680,1170 680,1300 820,1310 870,1290 1090,1260 1250,1240",
    "950,1130 960,1240 990,1400 1000,1480",
    "1000,1060 1030,1150 1020,1230",
    "1080,1370 1105,1500",
    "535,900 545,1020 600,1110 640,1160",
    "220,1210 240,1110 270,1050",
    "130,1080 170,1110",
    "1340,890 1400,960 1515,990",
    "1380,680 1515,670",
    "1515,1440 1430,1460 1300,1500",
    "100,1490 120,1430 140,1380",
    "200,960 260,1010 280,1060 300,1160",
    "220,1210 300,1220 400,1170 470,1200",
  ],
  mid: [
    "0,740 40,800 50,1000 -10,1090",
    "80,1050 180,830 200,790",
    "-10,990 70,1040 160,1105",
    "0,1160 130,1190",
    "20,1200 80,1100 150,860",
    "340,1040 380,1100 450,1170",
    "470,900 490,980 580,1050",
    "1050,870 1040,960 1060,1060",
    "1150,1010 1165,1120 1235,1150",
    "1275,830 1285,960",
    "870,1030 870,1120",
    "1410,860 1410,960",
    "520,1360 560,1440 620,1490",
    "300,700 330,640 400,600",
    "570,330 520,420 480,560",
    "470,340 430,440 380,580",
    "360,700 330,780",
    "100,1490 90,1430 130,1430 125,1500",
  ],
  white: [
    "255,140 262,240 245,290",
    "610,70 620,180",
    "460,70 520,180 540,290",
    "690,140 740,230 800,360 820,470",
    "645,350 700,430 700,480",
    "510,110 500,200",
    "670,800 740,830 750,900 785,970",
    "870,810 900,890 1030,1000",
    "400,1190 440,1290 480,1400 500,1510",
    "160,1295 220,1320 300,1335 400,1320 500,1285",
    "640,1220 700,1245 850,1255 1060,1230",
    "1000,60 990,150 1020,230",
    "1030,70 1030,130",
    "1140,70 1150,140 1190,230",
    "1060,1060 1120,1170",
    "540,1350 590,1380 650,1440 640,1520",
    "230,1410 250,1450 280,1510",
    "150,880 190,790",
    "190,1080 185,1030",
    "1380,60 1360,100",
    "0,900 30,940",
  ],
};

const dashed = [
  { set: "west", pts: "1310,60 1440,150 1568,232" },
  { set: "east", pts: "0,200 357,425 345,560 275,760" },
  { set: "east", pts: "180,990 135,1080 115,1190 100,1290 52,1405 -10,1407 -190,1430 -230,1460 -230,1500" },
  { set: "east", pts: "775,60 675,130 740,250 810,370 805,460 895,553 1500,368" },
];

const SX = 0.38265;
const SY = 0.33801;

const frames = {
  west: `translate(300 760) scale(${SX} ${SY})`,
  east: `translate(880 760) scale(${SX} ${SY})`,
};

const Layer = ({ data, frame, kind }) => {
  const line = { fill: "none", strokeLinejoin: "round", strokeLinecap: "butt", vectorEffect: "non-scaling-stroke" };
  if (kind === "land")
    return (
      <g transform={frame}>
        {data.pale.map((p) => <polygon key={p} points={p} fill="#ededed" />)}
        {data.parks.map((p) => <polygon key={p} points={p} fill="#e5e5e5" />)}
        {data.water.map((p) => <polygon key={p} points={p} fill="#c9c9c9" />)}
      </g>
    );
  return (
    <g transform={frame}>
      {data.white.map((p) => <polyline key={p} points={p} {...line} stroke="#fff" strokeWidth="2.600" />)}
      {data.mid.map((p) => <polyline key={p} points={p} {...line} stroke="#dbdbdb" strokeWidth="4.500" />)}
      {data.major.map((p) => <polyline key={p} points={p} {...line} stroke="#dadada" strokeWidth="7" />)}
    </g>
  );
};

const places = [
  ["Wayne", 703.7, 981, 71],
  ["Parsippany-Troy", 549.5, 1026.3, 172],
  ["Hills", 613, 1050.7, 45],
  ["Montclair", 738, 1076.4, 99.5],
  ["Morristown", 528.8, 1104, 120],
  ["Elizabeth", 739, 1232, 96],
  ["Bridgewater", 436.6, 1300, 126],
  ["White Plains", 1046.8, 876, 130.5],
  ["Stamford", 1226, 857, 98.5],
  ["Norwalk", 1328, 795.2, 86.5],
  ["Huntington", 1300, 1036, 117],
  ["Garden City", 1144.8, 1172, 122],
  ["Farmingdale", 1278, 1166, 126],
  ["Massapequa", 1255, 1216.3, 124],
  ["Valley Stream", 1080, 1232, 145],
];

const bubbles = [
  [476, 243], [18, 315], [516, 464], [528, 496], [663, 543], [426, 658], [254, 691], [512, 708],
  [363, 731], [338, 762], [447, 774], [74, 724], [74, 724], [75, 725], [204, 819], [213, 814],
  [206, 868], [36, 992], [1043, 268], [457, 842], [450, 872], [428, 946], [347, 792], [370, 802],
  [358, 812], [381, 834], [370, 835], [416, 867], [418, 905], [418, 890], [440, 895], [436, 892],
  [442, 886], [432, 880], [375, 905], [370, 898], [380, 908], [366, 912], [322, 975], [310, 998],
  [352, 928], [340, 820], [360, 880], [-52, 408], [-38, 485], [-616, 814], [-180, 902],
];

const MapDrawing = () => (
  <svg width="1150" height="536" viewBox="309 780 1150 536" fontFamily="Roboto, sans-serif">
    <rect x="309" y="780" width="1150" height="536" fill="#f5f5f5" />
    <Layer data={west} frame={frames.west} kind="land" />
    <Layer data={east} frame={frames.east} kind="land" />
    <Layer data={west} frame={frames.west} kind="roads" />
    <Layer data={east} frame={frames.east} kind="roads" />
    {dashed.map((d) => (
      <g key={d.pts} transform={frames[d.set]}>
        <polyline points={d.pts} fill="none" stroke="#b0b0b0" strokeWidth="1.500" strokeDasharray="4 4" vectorEffect="non-scaling-stroke" />
      </g>
    ))}
    <path d="M309 919H1459" stroke="#fff" strokeOpacity=".3" />
    <g fill="#616161" stroke="#f5f5f5" strokeWidth="4" strokeLinejoin="round" paintOrder="stroke" fontSize="23.500">
      {places.map(([name, x, y, w]) => (
        <text key={name} x={x} y={y} textLength={w}>{name}</text>
      ))}
      <text x="407" y="852">on</text>
      <text x="1438" y="1172">Babylon</text>
      <text x="302" y="801.500" fontSize="25">o</text>
      <text x="309" y="857.500" fontSize="18">….</text>
      <text x="958" y="977" fontSize="29.500" fontWeight="500" textLength="110">Yonkers</text>
      <text x="849" y="1190" fontSize="39.500" fontWeight="500" textLength="171">New York</text>
    </g>
    <g transform={frames.east}>
      <path
        d="M300 778L322 780L335 810L338 860L372 895L370 918L340 945L320 985L300 1010L262 1018L200 1018L192 995L205 950L222 915L252 880L262 820L280 790Z"
        fill="#2f71e9" stroke="#2f71e9" strokeWidth="11" strokeLinejoin="round" vectorEffect="non-scaling-stroke"
      />
    </g>
    <g fill="#2f71e9" fillOpacity=".5" stroke="#2f71e9" strokeOpacity=".7" strokeWidth="1.500">
      {bubbles.map(([x, y], i) => (
        <circle key={i} cx={880 + x * SX} cy={760 + y * SY} r="9" />
      ))}
    </g>
    <text x="328.500" y="1275" fontFamily="Lato, sans-serif" fontWeight="700" fontSize="37" textLength="112" lengthAdjust="spacingAndGlyphs" fill="#fff" stroke="#a2a2a2" strokeWidth="6" strokeLinejoin="round" paintOrder="stroke">Google</text>
  </svg>
);

/* ---------- content ---------- */

const menus = [["File", 85], ["Edit", 91], ["View", 96], ["Insert", 113], ["Page", 104], ["Arrange", 136], ["Resource", 157], ["Help", 70]];

const scores = [
  ["Total Revenue", "1.6M", 184, 43],
  ["Record Count", "100.0K", 178, 57],
  ["Average Trip Distance", "3.0", 179, 57],
  ["Average Fare Amount", "13.2", 185, 49],
  ["Average Tip Amount", "1.9", 185, 0],
];

const fields = [
  ["123", "dropoff_latitude"], ["123", "dropoff_longitude"], ["123", "extra"], ["123", "fare_amount"],
  ["123", "improvement_surcharge"], ["123", "mta_tax"], ["123", "passenger_count"], ["ABC", "payment_type_name"],
  ["ABC", "pick_location"], ["123", "pickup_latitude"], ["123", "pickup_longitude"], ["ABC", "rate_code_name"],
  ["123", "tip_amount"], ["123", "tolls_amount"], ["123", "total_amount"], ["date", "tpep_dropoff_datetime"],
  ["date", "tpep_pickup_datetime"], ["123", "trip_distance"],
];

const slots = [["Tooltip", "Add dimension"], ["Color dimension", "Add dimension"], ["Size", "Add metric"], ["Color metric", "Add metric"]];

const FieldChip = ({ icon, bg, iconColor, color, children }) => (
  <Chip>
    <ChipIcon $bg={bg} $fg={iconColor}>{icon}</ChipIcon>
    <ChipText $bg={bg} $fg={color}>{children}</ChipText>
  </Chip>
);

const TopTools = () => (
  <ToolBar>
    <Tool $w={32} $l={30}><UndoIcon /></Tool>
    <Tool $w={32} $l={32} $muted><UndoIcon flip /></Tool>
    <Rule $l={30} $r={16} />
    <SelectTool><PointerIcon /></SelectTool>
    <Rule $l={16} $r={28} />
    <Tool $w={36}><MdZoomIn size={48} /></Tool>
    <Caret $l={18} />
    <Rule $l={26} $r={28} />
    <Tool $w={32}><AddPageIcon /></Tool>
    <ToolText $l={16} $w={118}>Add page</ToolText>
    <Rule $l={28} $r={24} />
    <Tool $w={40}><AddDataIcon /></Tool>
    <ToolText $l={12} $w={113}>Add data</ToolText>
    <Rule $l={27} $r={26} />
    <Tool $w={38}><AddChartIcon /></Tool>
    <ToolText $l={12} $w={144}>Add a chart</ToolText>
    <Caret $l={10} />
    <Tool $w={38} $l={22}><CommunityIcon /></Tool>
    <Caret $l={8} />
    <Rule $l={26} $r={26} />
    <Tool $w={38}><AddControlIcon /></Tool>
    <ToolText $l={11} $w={167}>Add a control</ToolText>
    <Caret $l={10} />
    <Rule $l={26} $r={26} />
    <Tool $w={40}><MdCode size={48} /></Tool>
    <Tool $w={36} $l={24}><ImageIcon /></Tool>
    <Caret $l={8} />
    <Tool $w={36} $l={22}><TextIcon /></Tool>
    <Tool $w={36} $l={28}><LineIcon /></Tool>
    <Caret $l={18} />
    <Tool $w={36} $l={22}><ShapeIcon /></Tool>
    <Caret $l={18} />
    <Tool $w={8} $l={40}><MdMoreVert size={48} /></Tool>
    <PauseButton><PauseIcon />Pause updates</PauseButton>
  </ToolBar>
);

const ReportMap = () => (
  <MapFrame>
    <MapDrawing />
    <MapFooter>
      <FooterLink $w={197}>Keyboard shortcuts</FooterLink>
      <FooterLink $w={242}>Map data ©2023 Google</FooterLink>
      <FooterLink $w={142}>Terms of Use</FooterLink>
      <FooterLink $w={166}>Report a map error</FooterLink>
    </MapFooter>
    <MapButton $x={19} $y={20}><LocateIcon /></MapButton>
    <MapButton $x={1050} $y={20}><FullscreenGlyph /></MapButton>
    <MapButton $x={1050} $y={158} $h={80}><Pegman /></MapButton>
    <MapButton $x={1050} $y={302} $h={162}>
      <ZoomHalf><PlusGlyph /></ZoomHalf>
      <ZoomRule />
      <ZoomHalf><MinusGlyph /></ZoomHalf>
    </MapButton>
    <MapTools $top={-25} $left={11}><MdUndo size={20} /></MapTools>
    <MapTools $top={-25}>
      <MiniIcon $r={10}><MdEdit size={20} /></MiniIcon>
      <MiniIcon $r={18}><MdFilterList size={20} /></MiniIcon>
      <MiniIcon $r={18}><MdBolt size={20} /></MiniIcon>
      <MdMoreVert size={20} />
    </MapTools>
    <Handle $x={-5} $y={-5} />
    <Handle $x={571} $y={-5} />
    <Handle $x={1146} $y={-5} />
    <Handle $x={-5} $y={252} />
    <Handle $x={1146} $y={252} />
    <Handle $x={-5} $y={507} />
    <Handle $x={571} $y={507} />
    <Handle $x={1146} $y={507} />
  </MapFrame>
);

const Report = () => (
  <Canvas>
    <Page>
      <Hero><Brand>uber</Brand></Hero>
      <Band>Filters</Band>
      <FilterRow>
        <FilterCard $gap={58} $color="#444">Vendor ID<SmallCaret /></FilterCard>
        <FilterCard $gap={69}>Payment Type<SmallCaret /></FilterCard>
        <FilterCard $gap={0}>Rate Code<SmallCaret /></FilterCard>
      </FilterRow>
      <SliderCard>
        Trip Distance
        <SliderTrack>
          <Thumb />
          <TrackPart $on $w={72} />
          <Thumb />
          <TrackPart $w={292} />
        </SliderTrack>
        <SliderEnds><EndValue $dim>0</EndValue><EndValue>40</EndValue></SliderEnds>
      </SliderCard>
      <Band $lh={46}>Summary</Band>
      <MiniTools>
        <MiniIcon $t={-3} $r={10}><MdEdit size={20} /></MiniIcon>
        <MiniIcon $t={-3} $r={20}><MdFilterList size={20} /></MiniIcon>
        <MiniIcon $t={-3}><MdBolt size={20} /></MiniIcon>
      </MiniTools>
      <ScoreRow>
        {scores.map(([label, value, w, gap]) => (
          <ScoreCard key={label} $w={w} $gap={gap}>
            <ScoreLabel>{label}</ScoreLabel>
            <ScoreValue>{value}</ScoreValue>
          </ScoreCard>
        ))}
      </ScoreRow>
      <Band />
      <ReportMap />
    </Page>
  </Canvas>
);

const ChartPanel = () => (
  <Panel $w={480}>
    <PanelHead $l={18}>
      <ThumbFrame><MapThumb /></ThumbFrame>
      <PanelTitle $l={13}>Chart</PanelTitle>
      <Chevron />
    </PanelHead>
    <Tabs>
      <Tab $on>SETUP</Tab>
      <Tab>STYLE</Tab>
    </Tabs>
    <Section $t={31} $h={324}>
      <Heading $big $h={44}>Data source</Heading>
      <FieldChip bg="#dedbd6" iconColor="#616161" color="#202020" icon={<MdEdit size={36} />}>tabl_analytics</FieldChip>
      <BlendRow><PlusDisc /><BlendText>BLEND DATA</BlendText><MdHelpOutline size={32} /></BlendRow>
      <Heading $h={44}>Date Range Dimension</Heading>
      <FieldChip bg="#cee5cb" iconColor="#2b2e2a" color="#0c0c0c" icon={<MdEvent size={36} />}>tpep_pickup_datetime (Date)</FieldChip>
    </Section>
    <Section $t={32} $h={211}>
      <Heading $big $h={42}>Fields</Heading>
      <Heading $h={43}>Location</Heading>
      <FieldChip bg="#cee5cb" iconColor="#2b2e2a" color="#0c0c0c" icon={<MdPublic size={34} />}>pick_location</FieldChip>
    </Section>
    <Section $t={49} $h={520}>
      {slots.map(([label, action]) => (
        <React.Fragment key={label}>
          <Heading $h={41}>{label}</Heading>
          <Slot><PlusDisc />{action}</Slot>
        </React.Fragment>
      ))}
    </Section>
  </Panel>
);

const DataPanel = () => (
  <Panel $w={480}>
    <PanelHead $l={21}>
      <RackIcon color="#616161" />
      <PanelTitle $l={19}>Data</PanelTitle>
    </PanelHead>
    <SearchBox><MdSearch size={36} />Search</SearchBox>
    <SourceRow><QueryIcon />tabl_analytics</SourceRow>
    <FieldList>
      {fields.map(([kind, name]) => (
        <FieldRow key={name}>
          <FieldKind>{kind === "date" ? <MdEvent size={35} /> : <Squeeze>{kind}</Squeeze>}</FieldKind>
          {name}
        </FieldRow>
      ))}
    </FieldList>
    <AddRow><PlusDisc thin />Add a field</AddRow>
    <AddRow><PlusDisc thin />Add a parameter</AddRow>
    <AddDataRow><PlusDisc thin />Add Data</AddDataRow>
  </Panel>
);

export default function App() {
  return (
    <Screen>
      <Global />
      <DesktopEdge />
      <AppWindow>
        <MenuBar>
          <MenuLead />
          {menus.map(([name, w]) => <MenuItem key={name} $w={w}>{name}</MenuItem>)}
          <AvatarRule />
        </MenuBar>
        <TopTools />
        <Workspace>
          <Report />
          <ChartPanel />
          <DataPanel />
          <Rail>
            <RailButton><RailIcon><RackIcon color="#3b73e0" /></RailIcon>Data</RailButton>
            <RailButton><RailIcon><MdOutlineEdit size={48} /></RailIcon>Properties</RailButton>
            <RailExpand><Chevron right /></RailExpand>
          </Rail>
        </Workspace>
      </AppWindow>
      <BottomShade />
    </Screen>
  );
}
